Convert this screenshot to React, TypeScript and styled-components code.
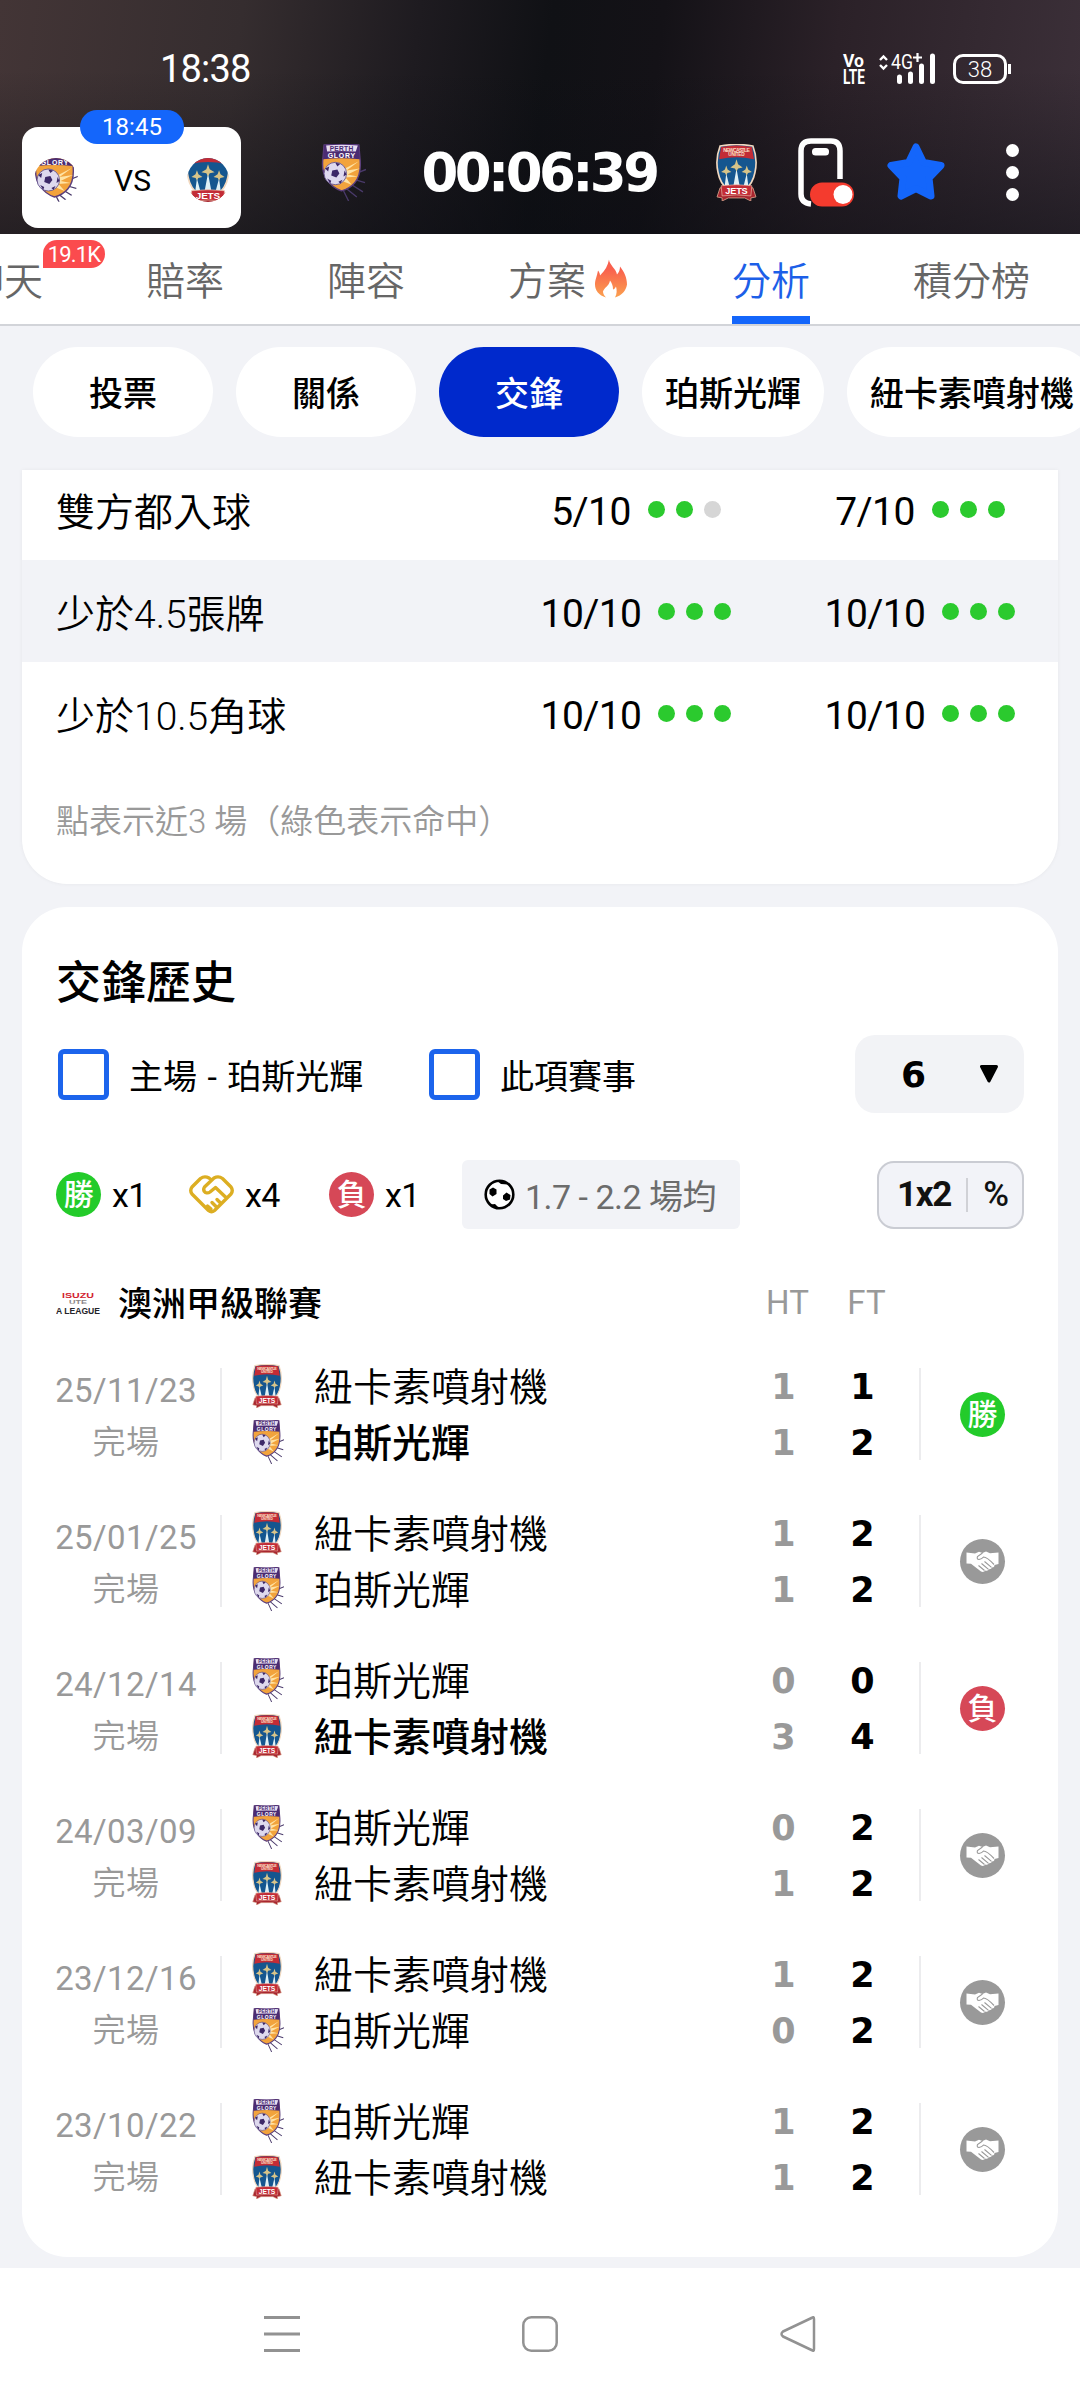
import styled, { createGlobalStyle } from 'styled-components';

const tabs = [
  { name: '聊天', width: 78, badge: '19.1K' },
  { name: '賠率', width: 78 },
  { name: '陣容', width: 78 },
  { name: '方案', width: 121, hot: true },
  { name: '分析', width: 78, active: true },
  { name: '積分榜', width: 117 },
];

const chips = ['投票', '關係', '交鋒', '珀斯光輝', '紐卡素噴射機'];

const trends = [
  { name: '雙方都入球', home: '5/10', homeDots: [1, 1, 0], away: '7/10', awayDots: [1, 1, 1] },
  { name: '少於4.5張牌', home: '10/10', homeDots: [1, 1, 1], away: '10/10', awayDots: [1, 1, 1] },
  { name: '少於10.5角球', home: '10/10', homeDots: [1, 1, 1], away: '10/10', awayDots: [1, 1, 1] },
];

const JETS = '紐卡素噴射機';
const GLORY = '珀斯光輝';

const matches = [
  { date: '25/11/23', home: JETS, away: GLORY, ht: [1, 1], ft: [1, 2], result: 'win', bold: GLORY },
  { date: '25/01/25', home: JETS, away: GLORY, ht: [1, 1], ft: [2, 2], result: 'draw', bold: '' },
  { date: '24/12/14', home: GLORY, away: JETS, ht: [0, 3], ft: [0, 4], result: 'lose', bold: JETS },
  { date: '24/03/09', home: GLORY, away: JETS, ht: [0, 1], ft: [2, 2], result: 'draw', bold: '' },
  { date: '23/12/16', home: JETS, away: GLORY, ht: [1, 0], ft: [2, 2], result: 'draw', bold: '' },
  { date: '23/10/22', home: GLORY, away: JETS, ht: [1, 1], ft: [2, 2], result: 'draw', bold: '' },
];

function GloryLogo({ w, h, crop }: { w: number; h: number; crop?: boolean }) {
  return (
    <svg width={w} height={h} viewBox={crop ? '0 7 43 44' : '0 0 44 56'} preserveAspectRatio="none">
      <path d="M33 35 L43 38 M30 40 L41 47 M25 44 L35 52 M22 46 L27 56 M34 29 L44 25" stroke="#4a3a6b" strokeWidth="1.3" />
      <path d="M3 1 Q20 -1 37 1 L38 13 Q40 30 33 38 Q28 44 20 46 Q11 43 6 35 Q0 27 2 13 Z" fill="#f2a33c" stroke="#5c3f7d" strokeWidth="1.4" />
      <path d="M16 28 L37 17 L25 26 L38 24 L26 30 L36 32 L24 33 L30 40 L20 36 Z" fill="#ffe3a4" />
      <path d="M3 1 Q20 -1 37 1 L38 15 Q20 13 2 15 Z" fill="#4b2c73" />
      <path d="M5 1.5 Q20 0 36 1.5 L34 7.3 Q20 6.5 6 7.3 Z" fill="#e7def0" />
      {!crop && (
        <text x="20" y="6.6" fontSize="6.5" fontWeight="700" textAnchor="middle" textLength="23" fill="#4b2c73" fontFamily="Liberation Sans, sans-serif">PERTH</text>
      )}
      <text x="20" y="13.8" fontSize="6.8" fontWeight="700" textAnchor="middle" textLength="27" fill="#fff" fontFamily="Liberation Sans, sans-serif">GLORY</text>
      <circle cx="14" cy="29" r="11" fill="#ded9ee" stroke="#5c4a86" strokeWidth="0.8" />
      <path d="M11 26 L16 25 L18 29 L15 33 L10 31 Z M4 24 L8 22 L7 27 Z M14 18.5 L19 19.5 L16 22 Z M23 26 L25 30 L22 32 Z M6 34 L10 36 L9 39 Z M17 37 L21 35 L19 39 Z" fill="#3c2868" />
    </svg>
  );
}

function JetsLogo({ w, h, crop }: { w: number; h: number; crop?: boolean }) {
  return (
    <svg width={w} height={h} viewBox={crop ? '1 9 38 43' : '0 0 40 56'} preserveAspectRatio="none">
      <path d="M1 52 L4 43 H36 L39 52 L34 53 L34 56 L28 53 H12 L6 56 L6 53 Z" fill="#a8262f" stroke="#d9a58e" strokeWidth="0.8" />
      <path d="M4 2 Q20 -1 36 2 Q41 15 38 28 Q36 39 28 45 H12 Q4 39 2 28 Q-1 15 4 2 Z" fill="#15568f" stroke="#f2d9c0" strokeWidth="1.6" />
      <path d="M5 3 Q20 0 35 3 L37 15 Q20 11 3 15 Z" fill="#c32c36" />
      {!crop && (
        <>
          <text x="20" y="7.5" fontSize="5" fontWeight="700" textAnchor="middle" textLength="26" fill="#fbe0c8" fontFamily="Liberation Sans, sans-serif">NEWCASTLE</text>
          <text x="20" y="12" fontSize="4.6" fontWeight="700" textAnchor="middle" textLength="16" fill="#fbe0c8" fontFamily="Liberation Sans, sans-serif">UNITED</text>
        </>
      )}
      <path d="M10 29 L13 41 H8.5 Z M20 24 L23 41 H17 Z M30 29 L31.5 41 H27 Z" fill="#dff0f5" />
      <path d="M20 15 L21.5 20 L26 23 L21.5 24 L20 27 L18.5 24 L14 23 L18.5 20 Z M10 21 L11.3 25 L15 27.5 L11.2 28.5 L10 31 L8.8 28.5 L5 27.5 L8.7 25 Z M30 21 L31.3 25 L35 27.5 L31.2 28.5 L30 31 L28.8 28.5 L25 27.5 L28.7 25 Z" fill="#d7c489" />
      <path d="M5 41 Q20 39 35 41 L34 51 Q20 49 6 51 Z" fill="#c32c36" stroke="#f0c9b4" strokeWidth="0.6" />
      <text x="20" y="49.3" fontSize="9" fontWeight="700" textAnchor="middle" textLength="22" fill="#fff" fontFamily="Liberation Sans, sans-serif">JETS</text>
    </svg>
  );
}

function Flame() {
  return (
    <svg width="32" height="39" viewBox="0 0 32 38">
      <defs>
        <linearGradient id="flame" x1="0" y1="0" x2="0" y2="1">
          <stop offset="0.25" stopColor="#f9604d" />
          <stop offset="1" stopColor="#fba14f" />
        </linearGradient>
      </defs>
      <path
        fill="url(#flame)"
        d="M14 0 C14 5 21 9 22 15 C24 13 25 10 25 7 C29 12 32 18 32 25 C31 31 27 36 20 38 C22 34 22 31 21 27 C20 29 19 30 18 30 C18 26 17 24 15 21 C14 27 9 28 8 32 C8 34 9 36 11 38 C4 36 0 31 0 25 C0 20 2 17 3 11 C4 12 5 14 5 16 C10 11 13 6 14 0 Z"
      />
    </svg>
  );
}

function PhoneToggle() {
  return (
    <svg width="57" height="69" viewBox="0 0 57 69">
      <path d="M13 66 Q3 65 3 56 V13 Q3 3 13 3 H33 Q42 3 42 13 V41" fill="none" stroke="#fff" strokeWidth="5.5" />
      <rect x="14" y="10" width="17" height="7.5" rx="3.5" fill="#fff" />
      <rect x="12" y="44.5" width="44" height="24" rx="12" fill="#f43b2e" />
      <circle cx="45" cy="56.5" r="9.5" fill="#fff" />
    </svg>
  );
}

function Star() {
  return (
    <svg width="60" height="58" viewBox="0 0 60 58">
      <path
        d="M30 4 L37.5 19.5 L55 22.5 L43 35 L45 53 L30 45.5 L15 53 L17 35 L5 22.5 L22.5 19.5 Z"
        fill="#1466fb"
        stroke="#1466fb"
        strokeWidth="7"
        strokeLinejoin="round"
      />
    </svg>
  );
}

function VolteIcon() {
  return (
    <VolteSvg width="24" height="34" viewBox="0 0 24 34">
      <text x="1" y="15" fontSize="19" fontWeight="700" textLength="21" lengthAdjust="spacingAndGlyphs">Vo</text>
      <text x="1" y="31.5" fontSize="19.5" fontWeight="700" textLength="22" lengthAdjust="spacingAndGlyphs">LTE</text>
    </VolteSvg>
  );
}

function SignalIcon() {
  return (
    <SignalSvg width="58" height="34" viewBox="0 0 58 34">
      <path d="M2 8 L5.5 4.5 L9 8 M2 13 L5.5 16.5 L9 13" fill="none" stroke="#fff" strokeWidth="2.4" />
      <text x="13" y="17" fontSize="20" textLength="22" lengthAdjust="spacingAndGlyphs">4G</text>
      <path d="M35 5.5 H44 M39.5 1 V10" stroke="#fff" strokeWidth="2.2" />
      <path d="M21.5 25 V29.5 M32.5 22 V29.5 M43.5 14 V29.5 M54.5 4 V29.5" stroke="#fff" strokeWidth="5" strokeLinecap="round" />
    </SignalSvg>
  );
}

function Ball() {
  return (
    <svg width="31" height="31" viewBox="0 0 31 31">
      <circle cx="15.5" cy="15.5" r="13.8" fill="#fff" stroke="#000" strokeWidth="2.6" />
      <path d="M5.5 10.5 L9 8.5 L12.5 10.5 L12.5 15 L8.5 17.5 L5.5 15 Z M19 16.5 L22.5 13.5 L26.5 16 L26 20.5 L22 22 L19 20 Z M13 2 L20 2.5 L24 5.5 L17 5 Z M7 25.5 L11 25 L15 29 L10 28.5 Z" fill="#000" />
    </svg>
  );
}

function DrawHands() {
  return (
    <svg width="45" height="39" viewBox="0 0 45 39" fill="none" stroke="#dcae22" strokeWidth="3.4" strokeLinecap="round" strokeLinejoin="round">
      <path d="M22.5 5 L20 3 Q15.5 0.5 11.5 3.5 L3 12 Q0.5 15.5 3 19 L19.5 35.5 Q22.5 38 25.5 35.5 L42 19 Q44.5 15.5 42 12 L33.5 3.5 Q29.5 0.5 25 3 L15.5 12 Q13.5 15.5 16.5 17.5 Q19 18.5 21 17 L26.5 12.5 L37.5 23" />
      <path d="M28 24.5 L31 27.5 M23 27.5 L27 31.5 M18.5 31 L22 34" />
    </svg>
  );
}

function Handshake() {
  return (
    <svg width="33" height="22" viewBox="0 0 33 22">
      <path
        fill="#fff"
        d="M0.5 1.5 L9 2.5 L13 0.8 L16.5 2 L20 0.5 L24 2.2 L32.5 1.5 V13 L28.5 14 Q28.5 16.5 26 16.5 Q25.5 18.5 23 18.3 Q22 20.3 19.5 19.5 Q17.5 21.8 15 20.5 L5 12.8 L0.5 12.5 Z"
      />
      <path
        d="M16.5 2 L11.5 5.5 Q10.5 8.5 13 8.5 Q16 8 17.5 6 Q21 6 28 13.5 M18.5 10.5 L25.5 16.3 M15.5 12.5 L22.5 18.3 M12.5 14.5 L18.5 19.5"
        fill="none"
        stroke="#999"
        strokeWidth="1.1"
      />
    </svg>
  );
}

function ResultMark({ result }: { result: string }) {
  if (result === 'draw') {
    return (
      <Mark color="#999999">
        <Handshake />
      </Mark>
    );
  }
  return <Mark color={result === 'win' ? '#23cb2a' : '#d64857'}>{result === 'win' ? '勝' : '負'}</Mark>;
}

function TeamLogo({ name }: { name: string }) {
  return name === JETS ? <JetsLogo w={30} h={44} /> : <GloryLogo w={32} h={44} />;
}

export default function App() {
  return (
    <Screen>
      <GlobalStyle />
      <Header>
        <StatusBar>
          <Clock>18:38</Clock>
          <StatusIcons>
            <VolteIcon />
            <SignalIcon />
            <Battery>38</Battery>
          </StatusIcons>
        </StatusBar>
        <MatchBar>
          <MatchCard>
            <KickOff>18:45</KickOff>
            <RoundLogo>
              <GloryLogo w={44} h={44} crop />
            </RoundLogo>
            <Versus>VS</Versus>
            <RoundLogo>
              <JetsLogo w={42} h={44} crop />
            </RoundLogo>
          </MatchCard>
          <Countdown>
            <GloryLogo w={45} h={57} />
            <Timer>00:06:39</Timer>
            <JetsLogo w={41} h={57} />
          </Countdown>
          <Actions>
            <PhoneToggle />
            <Star />
            <More>
              <i />
              <i />
              <i />
            </More>
          </Actions>
        </MatchBar>
      </Header>

      <Tabs>
        {tabs.map((tab) => (
          <Tab key={tab.name} $width={tab.width} $active={tab.active}>
            {tab.name}
            {tab.hot && <Flame />}
            {tab.badge && <Badge>{tab.badge}</Badge>}
          </Tab>
        ))}
      </Tabs>

      <Content>
        <Chips>
          {chips.map((chip) => (
            <Chip key={chip} $active={chip === '交鋒'}>
              {chip}
            </Chip>
          ))}
        </Chips>

        <TrendCard>
          {trends.map((item, i) => (
            <TrendRow key={item.name} $shaded={i === 1} $cut={i === 0}>
              <span>{item.name}</span>
              <TrendValue>
                <b>{item.home}</b>
                {item.homeDots.map((hit, n) => <Dot key={n} $hit={hit} />)}
              </TrendValue>
              <TrendValue>
                <b>{item.away}</b>
                {item.awayDots.map((hit, n) => <Dot key={n} $hit={hit} />)}
              </TrendValue>
            </TrendRow>
          ))}
          <Note>點表示近3 場（綠色表示命中）</Note>
        </TrendCard>

        <HistoryCard>
          <Title>交鋒歷史</Title>
          <Filters>
            <Check $width={371}>
              <Box />
              主場 - 珀斯光輝
            </Check>
            <Check $width={300}>
              <Box />
              此項賽事
            </Check>
            <Select>
              6
              <svg width="18" height="18" viewBox="0 0 18 18">
                <path d="M1.5 1.5 H16.5 L9 16 Z" stroke="#000" strokeWidth="3" strokeLinejoin="round" />
              </svg>
            </Select>
          </Filters>

          <Summary>
            <SummaryItem $width={133}>
              <ResultMark result="win" />
              x1
            </SummaryItem>
            <SummaryItem $width={140}>
              <DrawHands />
              x4
            </SummaryItem>
            <SummaryItem $width={133}>
              <ResultMark result="lose" />
              x1
            </SummaryItem>
            <Average>
              <Ball />
              <span>1.7 - 2.2 場均</span>
            </Average>
            <OddsToggle>
              <b>1x2</b>
              <i />
              <span>%</span>
            </OddsToggle>
          </Summary>

          <League>
            <svg width="45" height="25" viewBox="0 0 45 25" fontFamily="Liberation Sans, sans-serif" fontWeight="700">
              <text x="6" y="7.5" fontSize="8" textLength="32" lengthAdjust="spacingAndGlyphs" fill="#d2232f">ISUZU</text>
              <text x="13" y="13.5" fontSize="5.5" textLength="18" lengthAdjust="spacingAndGlyphs" fill="#8b8587">UTE</text>
              <text x="0" y="24" fontSize="9" textLength="44" lengthAdjust="spacingAndGlyphs" fill="#24242a">A LEAGUE</text>
            </svg>
            <LeagueName>澳洲甲級聯賽</LeagueName>
            <Half>HT</Half>
            <Half>FT</Half>
          </League>

          {matches.map((match) => (
            <MatchRow key={match.date}>
              <DateCell>
                <b>{match.date}</b>
                <span>完場</span>
              </DateCell>
              <Teams>
                {[match.home, match.away].map((name, i) => (
                  <Team key={name}>
                    <LogoCell>
                      <TeamLogo name={name} />
                    </LogoCell>
                    <TeamName $bold={name === match.bold}>{name}</TeamName>
                    <Score color="#999999">{match.ht[i]}</Score>
                    <Score color="#000000">{match.ft[i]}</Score>
                  </Team>
                ))}
              </Teams>
              <ResultCell>
                <ResultMark result={match.result} />
              </ResultCell>
            </MatchRow>
          ))}
        </HistoryCard>
      </Content>

      <NavBar>
        <svg width="36" height="38" viewBox="0 0 36 38" stroke="#929292" strokeWidth="3">
          <path d="M0 2.5 H36 M0 19 H36 M0 35.5 H36" />
        </svg>
        <svg width="36" height="38" viewBox="0 0 36 38" stroke="#929292" strokeWidth="2.5" fill="none">
          <rect x="1.3" y="2.3" width="33.4" height="33.4" rx="8" />
        </svg>
        <svg width="36" height="38" viewBox="0 0 36 38" stroke="#929292" strokeWidth="2.5" fill="none" strokeLinejoin="round">
          <path d="M34 4 V34 Q34 37 31.5 35 L3 21.5 Q0 19 3 16.5 L31.5 3 Q34 1 34 4 Z" />
        </svg>
      </NavBar>
    </Screen>
  );
}

const GlobalStyle = createGlobalStyle`
  * {
    box-sizing: border-box;
  }

  body {
    margin: 0;
    font-family: Roboto, 'Noto Sans CJK TC', sans-serif;
  }

  svg {
    display: block;
    flex-shrink: 0;
  }
`;

const Screen = styled.div`
  width: 1080px;
  height: 2400px;
  overflow: hidden;
  display: flex;
  flex-direction: column;
  background-color: #f2f3f7;
  color: #000;
`;

const Header = styled.header`
  height: 234px;
  background:
    linear-gradient(180deg, rgba(10, 12, 18, 0) 30%, rgba(10, 12, 18, 0.5) 100%),
    linear-gradient(97deg, #433536 0%, #352d2f 22%, #1e1b20 38%, #101115 50%, #141217 60%, #2b2128 76%, #3c3039 100%);
`;

const StatusBar = styled.div`
  height: 110px;
  padding: 28px 68px 0 160px;
  display: flex;
  align-items: center;
  justify-content: space-between;
  color: white;
`;

const Clock = styled.span`
  font-size: 38px;
  letter-spacing: -0.8px;
`;

const StatusIcons = styled.div`
  display: flex;
  align-items: center;
`;

const VolteSvg = styled.svg`
  margin-right: 12px;
  overflow: visible;
  fill: white;
`;

const SignalSvg = styled.svg`
  overflow: visible;

  text {
    fill: white;
  }
`;

const Battery = styled.div`
  width: 54px;
  height: 30px;
  margin: 0 5px 0 17px;
  border: 3px solid white;
  border-radius: 10px;
  position: relative;
  font-size: 22px;
  font-weight: 300;
  line-height: 25px;
  text-align: center;

  &::after {
    content: '';
    position: absolute;
    right: -7px;
    top: 7px;
    width: 3px;
    height: 10px;
    background-color: white;
  }
`;

const MatchBar = styled.div`
  height: 124px;
  padding: 17px 0 0 22px;
  display: flex;
  align-items: flex-start;
`;

const MatchCard = styled.div`
  position: relative;
  width: 219px;
  height: 101px;
  padding: 4px 12px 0;
  border-radius: 16px;
  background-color: white;
  display: flex;
  align-items: center;
  justify-content: space-between;
`;

const KickOff = styled.div`
  position: absolute;
  left: 58px;
  top: -17px;
  width: 104px;
  height: 34px;
  border-radius: 17px;
  background-color: #1466fb;
  color: white;
  font-size: 24px;
  line-height: 35px;
  text-align: center;
`;

const RoundLogo = styled.div`
  border-radius: 50%;
  overflow: hidden;
`;

const Versus = styled.span`
  margin-top: 2px;
  font-size: 30px;
`;

const Countdown = styled.div`
  width: 436px;
  margin-left: 80px;
  margin-top: 17px;
  display: flex;
  align-items: center;
  justify-content: space-between;
`;

const Timer = styled.span`
  margin-left: -4px;
  color: white;
  font-family: 'DejaVu Sans', sans-serif;
  font-size: 53px;
  font-weight: 700;
  line-height: 57px;
  letter-spacing: -3.6px;
`;

const Actions = styled.div`
  height: 90px;
  margin-left: 41px;
  display: flex;
  align-items: center;
  gap: 31px;
`;

const More = styled.div`
  width: 13px;
  margin-left: 29px;
  display: flex;
  flex-direction: column;
  gap: 9px;

  i {
    height: 13px;
    border-radius: 50%;
    background-color: white;
  }
`;

const Tabs = styled.nav`
  height: 92px;
  padding-right: 50px;
  background-color: white;
  border-bottom: 2px solid #d2d4d9;
  display: flex;
  justify-content: flex-end;
  gap: 103px;
`;

const Tab = styled.div<{ $width: number; $active?: boolean }>`
  position: relative;
  flex-shrink: 0;
  width: ${(props) => props.$width}px;
  height: 90px;
  display: flex;
  align-items: center;
  gap: 9px;
  font-size: 39px;
  white-space: nowrap;
  font-weight: 350;
  color: ${(props) => (props.$active ? '#1c5fe8' : '#666666')};
  border-bottom: 8px solid ${(props) => (props.$active ? '#1466fb' : 'transparent')};
  padding-top: 6px;
`;

const Badge = styled.span`
  position: absolute;
  left: 78px;
  top: 6px;
  width: 62px;
  height: 28px;
  border-radius: 14px 14px 14px 0;
  background-color: #fb4b4e;
  color: white;
  font-size: 22px;
  font-weight: 400;
  line-height: 29px;
  letter-spacing: -0.8px;
  text-align: center;
`;

const Content = styled.main`
  height: 1942px;
  overflow: hidden;
`;

const Chips = styled.div`
  height: 144px;
  padding: 21px 0 0 33px;
  display: flex;
  gap: 23px;
`;

const Chip = styled.div<{ $active: boolean }>`
  flex-shrink: 0;
  min-width: 180px;
  height: 90px;
  padding: 0 23px;
  border-radius: 45px;
  font-size: 34px;
  font-weight: 500;
  line-height: 94px;
  text-align: center;
  white-space: nowrap;
  color: ${(props) => (props.$active ? 'white' : 'black')};
  background-color: ${(props) => (props.$active ? '#0029cc' : 'white')};
`;

const TrendCard = styled.section`
  height: 414px;
  margin: 0 22px 23px;
  border-radius: 0 0 45px 45px;
  background-color: white;
  box-shadow: 0 0 4px rgba(0, 0, 0, 0.05);
`;

const TrendRow = styled.div<{ $shaded: boolean; $cut: boolean }>`
  height: ${(props) => (props.$cut ? 90 : 102)}px;
  padding: 0 0 0 34px;
  padding-bottom: ${(props) => (props.$cut ? 12 : 0)}px;
  display: grid;
  grid-template-columns: 438px 284px 284px;
  align-items: center;
  font-size: 39px;
  font-weight: 350;
  background-color: ${(props) => (props.$shaded ? '#f2f3f7' : 'white')};
`;

const TrendValue = styled.div`
  padding-top: 5px;
  display: flex;
  align-items: center;
  justify-content: center;
  gap: 11px;

  b {
    margin-right: 6px;
    font-size: 39px;
    font-weight: 400;
    letter-spacing: -0.6px;
  }
`;

const Dot = styled.i<{ $hit: number }>`
  width: 17px;
  height: 17px;
  margin-bottom: 5px;
  border-radius: 50%;
  background-color: ${(props) => (props.$hit ? '#2bca2e' : '#d6d6d6')};
`;

const Note = styled.p`
  margin: 0;
  padding: 35px 34px 0;
  font-size: 33px;
  font-weight: 350;
  line-height: 46px;
  color: #999;
`;

const HistoryCard = styled.section`
  height: 1350px;
  margin: 0 22px;
  padding: 45px 34px 0;
  border-radius: 45px;
  background-color: white;
`;

const Title = styled.h1`
  margin: 0;
  font-size: 45px;
  font-weight: 500;
  line-height: 64px;
`;

const Filters = styled.div`
  height: 78px;
  margin-top: 19px;
  display: flex;
  align-items: center;
`;

const Check = styled.label<{ $width: number }>`
  width: ${(props) => props.$width}px;
  display: flex;
  align-items: center;
  gap: 20px;
  font-size: 34px;
  white-space: nowrap;
  word-spacing: 2px;
`;

const Box = styled.span`
  width: 51px;
  height: 51px;
  margin-left: 2px;
  border: 5px solid #1c64ec;
  border-radius: 6px;
`;

const Select = styled.div`
  width: 169px;
  height: 78px;
  margin-left: auto;
  padding: 0 26px 0 46px;
  border-radius: 20px;
  background-color: #f2f3f6;
  display: flex;
  align-items: center;
  justify-content: space-between;
  font-family: 'DejaVu Sans', sans-serif;
  font-size: 36px;
  font-weight: 700;
`;

const Summary = styled.div`
  height: 69px;
  margin-top: 47px;
  display: flex;
  align-items: center;
`;

const SummaryItem = styled.div<{ $width: number }>`
  width: ${(props) => props.$width}px;
  display: flex;
  align-items: center;
  gap: 11px;
  font-size: 34px;
  letter-spacing: -0.6px;
`;

const Mark = styled.div`
  width: 45px;
  height: 45px;
  flex-shrink: 0;
  border-radius: 50%;
  background-color: ${(props) => props.color};
  color: white;
  font-size: 30px;
  font-weight: 500;
  line-height: 45px;
  display: flex;
  align-items: center;
  justify-content: center;
`;

const Average = styled.div`
  width: 278px;
  height: 69px;
  padding-left: 22px;
  border-radius: 6px;
  background-color: #f2f3f7;
  display: flex;
  align-items: center;
  gap: 10px;
  font-size: 34px;
  font-weight: 400;
  letter-spacing: -0.5px;
  white-space: nowrap;
  color: #6c6c6c;
`;

const OddsToggle = styled.div`
  width: 147px;
  height: 68px;
  margin-left: auto;
  padding: 0 13px 0 18px;
  border: 2px solid #caccd3;
  border-radius: 17px;
  background-color: #f2f3f8;
  display: flex;
  align-items: center;
  justify-content: space-between;
  font-size: 35px;
  font-weight: 500;
  color: #111;

  b {
    font-weight: 700;
    letter-spacing: -1.3px;
  }

  i {
    width: 2px;
    height: 34px;
    background-color: #d0d1d6;
  }
`;

const League = styled.div`
  height: 72px;
  margin-top: 37px;
  margin-bottom: 2px;
  display: flex;
  align-items: center;
`;

const LeagueName = styled.span`
  width: 630px;
  margin-left: 17px;
  margin-top: -2px;
  font-size: 34px;
  font-weight: 500;
`;

const Half = styled.span`
  width: 79px;
  color: #999;
  font-size: 33px;
  font-weight: 400;
  text-align: center;
`;

const MatchRow = styled.div`
  height: 147px;
  display: flex;
  align-items: center;
`;

const DateCell = styled.div`
  width: 164px;
  padding: 6px 24px 0 0;
  display: flex;
  flex-direction: column;
  align-items: center;
  font-size: 33px;
  font-weight: 350;
  line-height: 52px;
  letter-spacing: 0.4px;
  color: #999;

  b {
    font-weight: 400;
  }
`;

const Teams = styled.div`
  width: 701px;
  height: 92px;
  border-left: 2px solid #ececee;
  border-right: 2px solid #ececee;
  display: flex;
  flex-direction: column;
  justify-content: center;
`;

const Team = styled.div`
  height: 56px;
  flex-shrink: 0;
  display: flex;
  align-items: center;
`;

const LogoCell = styled.div`
  width: 92px;
  padding-left: 30px;
`;

const TeamName = styled.span<{ $bold: boolean }>`
  width: 430px;
  margin-top: -3px;
  font-size: 39px;
  font-weight: ${(props) => (props.$bold ? 500 : 350)};
`;

const Score = styled.span`
  width: 79px;
  padding-top: 3px;
  font-family: 'DejaVu Sans', sans-serif;
  font-size: 35px;
  font-weight: 700;
  text-align: center;
  color: ${(props) => props.color};
`;

const ResultCell = styled.div`
  margin-left: 39px;
  padding-top: 2px;
`;

const NavBar = styled.footer`
  height: 132px;
  padding: 0 264px 0;
  background-color: white;
  display: flex;
  align-items: center;
  justify-content: space-between;
`;
